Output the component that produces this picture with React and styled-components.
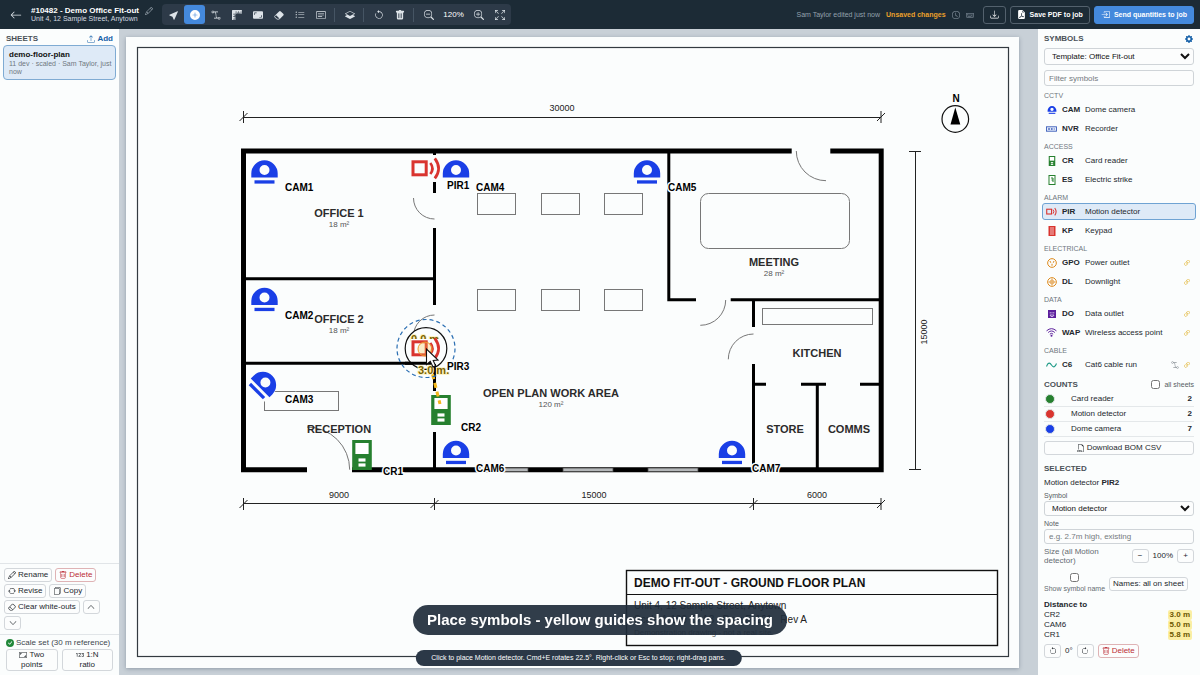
import React from "react";
import styled, { createGlobalStyle, css } from "styled-components";
import {
  Bs123,
  BsArrowClockwise,
  BsArrowCounterclockwise,
  BsArrowLeft,
  BsArrowRepeat,
  BsArrowsFullscreen,
  BsAspectRatio,
  BsAspectRatioFill,
  BsBezier2,
  BsBoxArrowInRight,
  BsCardText,
  BsCheckCircleFill,
  BsChevronDown,
  BsChevronUp,
  BsClock,
  BsCursorFill,
  BsDownload,
  BsEraser,
  BsEraserFill,
  BsFileEarmarkPdfFill,
  BsFiletypeCsv,
  BsFiles,
  BsGearFill,
  BsKeyboard,
  BsLayersHalf,
  BsLink45Deg,
  BsListUl,
  BsPencil,
  BsPlusCircleFill,
  BsRulers,
  BsTrash,
  BsTrashFill,
  BsUpload,
  BsZoomIn,
  BsZoomOut,
} from "react-icons/bs";

const BLUE = "#1a3fe6";
const RED = "#d9342f";
const GREEN = "#26802f";
const ORANGE = "#dd8a1c";
const PURPLE = "#5b1f9c";

const tools = [
  { label: "Select", icon: BsCursorFill },
  { label: "Place symbol", icon: BsPlusCircleFill, active: true },
  { label: "Cable run", icon: BsBezier2 },
  { label: "Measure", icon: BsRulers },
  { label: "Set scale", icon: BsAspectRatioFill },
  { label: "White-out", icon: BsEraserFill },
  { label: "Legend", icon: BsListUl },
  { label: "Text note", icon: BsCardText },
  null,
  { label: "Layers", icon: BsLayersHalf },
  null,
  { label: "Undo", icon: BsArrowCounterclockwise },
  { label: "Delete", icon: BsTrashFill },
  null,
];

const palette = [
  {
    title: "CCTV",
    items: [
      { code: "CAM", name: "Dome camera", icon: <CameraIcon /> },
      { code: "NVR", name: "Recorder", icon: <RecorderIcon /> },
    ],
  },
  {
    title: "ACCESS",
    items: [
      { code: "CR", name: "Card reader", icon: <ReaderIcon /> },
      { code: "ES", name: "Electric strike", icon: <StrikeIcon /> },
    ],
  },
  {
    title: "ALARM",
    items: [
      { code: "PIR", name: "Motion detector", icon: <MotionIcon />, active: true },
      { code: "KP", name: "Keypad", icon: <KeypadIcon /> },
    ],
  },
  {
    title: "ELECTRICAL",
    items: [
      { code: "GPO", name: "Power outlet", icon: <OutletIcon />, linked: true },
      { code: "DL", name: "Downlight", icon: <DownlightIcon />, linked: true },
    ],
  },
  {
    title: "DATA",
    items: [
      { code: "DO", name: "Data outlet", icon: <DataIcon />, linked: true },
      { code: "WAP", name: "Wireless access point", icon: <WifiIcon />, linked: true },
    ],
  },
  {
    title: "CABLE",
    items: [
      { code: "C6", name: "Cat6 cable run", icon: <CableIcon />, linked: true, run: true },
    ],
  },
];

const counts = [
  { name: "Card reader", color: GREEN, total: 2 },
  { name: "Motion detector", color: RED, total: 2 },
  { name: "Dome camera", color: BLUE, total: 7 },
];

const distances = [
  { code: "CR2", value: "3.0 m" },
  { code: "CAM6", value: "5.0 m" },
  { code: "CR1", value: "5.8 m" },
];

export default function App() {
  return (
    <Page>
      <GlobalStyle />
      <TopBar />
      <Workspace>
        <SheetPanel />
        <Canvas>
          <FloorPlan />
          <Hint>
            Click to place Motion detector. Cmd+E rotates 22.5°. Right-click or Esc to
            stop; right-drag pans.
          </Hint>
        </Canvas>
        <SymbolPanel />
      </Workspace>
      <Caption>Place symbols - yellow guides show the spacing</Caption>
    </Page>
  );
}

function TopBar() {
  return (
    <Header>
      <BackLink href="#jobs" aria-label="Back to job">
        <BsArrowLeft />
      </BackLink>
      <JobInfo>
        <JobTitle>
          #10482 - Demo Office Fit-out
          <BsPencil />
        </JobTitle>
        <JobAddress>Unit 4, 12 Sample Street, Anytown</JobAddress>
      </JobInfo>
      <Toolbar>
        {tools.map((tool, i) =>
          tool ? (
            <Tool key={tool.label} aria-label={tool.label} $active={tool.active}>
              <tool.icon />
            </Tool>
          ) : (
            <ToolDivider key={i} />
          )
        )}
        <Tool aria-label="Zoom out">
          <BsZoomOut />
        </Tool>
        <ZoomLevel>120%</ZoomLevel>
        <Tool aria-label="Zoom in">
          <BsZoomIn />
        </Tool>
        <Tool aria-label="Fit to screen">
          <BsArrowsFullscreen />
        </Tool>
      </Toolbar>
      <Status>
        <span>Sam Taylor edited just now</span>
        <Unsaved>Unsaved changes</Unsaved>
        <BsClock />
        <BsKeyboard />
      </Status>
      <HeaderButton aria-label="Download">
        <BsDownload />
      </HeaderButton>
      <HeaderButton>
        <BsFileEarmarkPdfFill />
        Save PDF to job
      </HeaderButton>
      <HeaderButton $primary>
        <BsBoxArrowInRight />
        Send quantities to job
      </HeaderButton>
    </Header>
  );
}

function SheetPanel() {
  return (
    <LeftPanel>
      <PanelHead>
        <PanelTitle>SHEETS</PanelTitle>
        <AddButton>
          <BsUpload />
          Add
        </AddButton>
      </PanelHead>
      <SheetCard>
        <SheetName>demo-floor-plan</SheetName>
        <SheetMeta>11 dev · scaled · Sam Taylor, just now</SheetMeta>
      </SheetCard>
      <SheetActions>
        <Button>
          <BsPencil />
          Rename
        </Button>
        <Button $danger>
          <BsTrash />
          Delete
        </Button>
        <Button>
          <BsArrowRepeat />
          Revise
        </Button>
        <Button>
          <BsFiles />
          Copy
        </Button>
        <Button>
          <BsEraser />
          Clear white-outs
        </Button>
        <Button aria-label="Move up" $square>
          <BsChevronUp />
        </Button>
        <Button aria-label="Move down" $square>
          <BsChevronDown />
        </Button>
      </SheetActions>
      <ScaleBox>
        <ScaleState>
          <BsCheckCircleFill />
          Scale set (30 m reference)
        </ScaleState>
        <ScaleButtons>
          <ScaleButton>
            <BsAspectRatio /> Two points
          </ScaleButton>
          <ScaleButton>
            <Bs123 /> 1:N ratio
          </ScaleButton>
        </ScaleButtons>
      </ScaleBox>
    </LeftPanel>
  );
}

function SymbolPanel() {
  return (
    <RightPanel>
      <PanelHead>
        <PanelTitle>SYMBOLS</PanelTitle>
        <GearButton aria-label="Symbol settings">
          <BsGearFill />
        </GearButton>
      </PanelHead>
      <TemplateSelect aria-label="Template" defaultValue="office">
        <option value="office">Template: Office Fit-out</option>
      </TemplateSelect>
      <FilterInput type="text" aria-label="Filter symbols" placeholder="Filter symbols" />

      {palette.map((group) => (
        <SymbolGroup key={group.title}>
          <GroupTitle>{group.title}</GroupTitle>
          {group.items.map((item) => (
            <SymbolRow key={item.code} $active={item.active}>
              <SymbolIcon>{item.icon}</SymbolIcon>
              <SymbolCode>{item.code}</SymbolCode>
              <SymbolName>{item.name}</SymbolName>
              {item.run && <BsBezier2 color="#7d858c" />}
              {item.linked && <BsLink45Deg color="#dfae22" />}
            </SymbolRow>
          ))}
        </SymbolGroup>
      ))}

      <CountsHead>
        <PanelTitle>COUNTS</PanelTitle>
        <CheckLabel>
          <Checkbox type="checkbox" />
          all sheets
        </CheckLabel>
      </CountsHead>
      <CountTable>
        <tbody>
          {counts.map((row) => (
            <tr key={row.name}>
              <DotCell>
                <Dot $color={row.color} />
              </DotCell>
              <td>{row.name}</td>
              <TotalCell>{row.total}</TotalCell>
            </tr>
          ))}
        </tbody>
      </CountTable>
      <Button $wide>
        <BsFiletypeCsv />
        Download BOM CSV
      </Button>

      <SelectedTitle>SELECTED</SelectedTitle>
      <SelectedName>
        Motion detector <b>PIR2</b>
      </SelectedName>
      <FieldLabel htmlFor="symbol">Symbol</FieldLabel>
      <Select id="symbol" defaultValue="pir">
        <option value="pir">Motion detector</option>
      </Select>
      <FieldLabel htmlFor="note">Note</FieldLabel>
      <Input id="note" type="text" placeholder="e.g. 2.7m high, existing" />
      <SizeRow>
        <SizeLabel>Size (all Motion detector)</SizeLabel>
        <Button $square aria-label="Smaller">−</Button>
        <span>100%</span>
        <Button $square aria-label="Larger">+</Button>
      </SizeRow>
      <NameRow>
        <NameLabel>
          <Checkbox type="checkbox" />
          Show symbol name
        </NameLabel>
        <Button>Names: all on sheet</Button>
      </NameRow>
      <DistanceTitle>Distance to</DistanceTitle>
      {distances.map((row) => (
        <DistanceRow key={row.code}>
          <span>{row.code}</span>
          <Distance>{row.value}</Distance>
        </DistanceRow>
      ))}
      <RotateRow>
        <Button $square aria-label="Rotate left">
          <BsArrowCounterclockwise />
        </Button>
        <span>0°</span>
        <Button $square aria-label="Rotate right">
          <BsArrowClockwise />
        </Button>
        <Button $danger>
          <BsTrash />
          Delete
        </Button>
      </RotateRow>
    </RightPanel>
  );
}

/* Device glyphs, drawn around their own centre */

function Camera() {
  return (
    <g fill={BLUE}>
      <path
        fillRule="evenodd"
        d="M-13.2 5.5V1.5A13.2 13.2 0 0 1 13.2 1.5V5.5ZM0 -7A5 5 0 1 0 0 3A5 5 0 1 0 0 -7Z"
      />
      <rect x="-10" y="8.3" width="20" height="3.3" />
    </g>
  );
}

function Motion() {
  return (
    <g fill="none" stroke={RED} strokeWidth="3">
      <rect x="-13" y="-6.2" width="13.2" height="13" />
      <path d="M4.3 -5Q8.7 0.5 4.3 6" strokeWidth="2.6" />
      <path d="M8.8 -9.7Q16.4 0.5 8.8 10.4" strokeWidth="2.8" />
    </g>
  );
}

function Reader() {
  return (
    <g>
      <rect x="-9.8" y="-15" width="19.6" height="30" fill={GREEN} />
      <g fill="#fff">
        <rect x="-6.6" y="-12" width="13.2" height="11" />
        <rect x="-3.5" y="3.4" width="7" height="3.2" />
        <rect x="-3.5" y="8.4" width="7" height="3.2" />
      </g>
    </g>
  );
}

function CameraIcon() {
  return (
    <svg viewBox="-15 -15 30 30" width="10" height="10">
      <Camera />
    </svg>
  );
}

function RecorderIcon() {
  return (
    <svg viewBox="0 0 20 10" width="11" height="6">
      <rect x="1" y="1" width="18" height="8" fill="#e6edfb" stroke="#3558b8" strokeWidth="1.6" />
      <path d="M4 3.5h3v3H4zM9 3.5h3v3H9zM14 4h2v2h-2z" fill="#3558b8" />
    </svg>
  );
}

function ReaderIcon() {
  return (
    <svg viewBox="-15 -15 30 30" width="10" height="10">
      <Reader />
    </svg>
  );
}

function StrikeIcon() {
  return (
    <svg viewBox="0 0 20 20" width="10" height="10">
      <rect x="4" y="1" width="12" height="18" fill="#fff" stroke={GREEN} strokeWidth="2" />
      <path d="M8 6h4v8M12 10H9" fill="none" stroke={GREEN} strokeWidth="2" />
    </svg>
  );
}

function MotionIcon() {
  return (
    <svg viewBox="-15 -12 30 24" width="11" height="9">
      <Motion />
    </svg>
  );
}

function KeypadIcon() {
  return (
    <svg viewBox="0 0 20 20" width="10" height="10">
      <rect x="3" y="0" width="14" height="20" fill={RED} />
      <path d="M6 4h8M6 8h8M6 12h8M6 16h8" stroke="#fff" strokeWidth="1.4" />
    </svg>
  );
}

function OutletIcon() {
  return (
    <svg viewBox="0 0 20 20" width="10" height="10">
      <circle cx="10" cy="10" r="8.7" fill="none" stroke={ORANGE} strokeWidth="2" />
      <path d="M6 6l1.5 3.5M14 6l-1.5 3.5M10 11.5v4" stroke={ORANGE} strokeWidth="2" />
    </svg>
  );
}

function DownlightIcon() {
  return (
    <svg viewBox="0 0 20 20" width="10" height="10">
      <g fill="none" stroke={ORANGE} strokeWidth="2">
        <circle cx="10" cy="10" r="8.7" />
        <circle cx="10" cy="10" r="4" strokeWidth="1.2" />
        <path d="M10 3v14M3 10h14" strokeWidth="1.5" />
      </g>
    </svg>
  );
}

function DataIcon() {
  return (
    <svg viewBox="0 0 20 20" width="10" height="10">
      <rect x="2" y="2" width="16" height="16" fill={PURPLE} />
      <path
        d="M6.5 6v3M10 6v3M13.5 6v3M6 12h8l-2 3H8z"
        fill="none"
        stroke="#e5d8f5"
        strokeWidth="1.5"
      />
    </svg>
  );
}

function WifiIcon() {
  return (
    <svg viewBox="0 0 20 20" width="11" height="11">
      <g fill="none" stroke={PURPLE} strokeWidth="1.8">
        <path d="M1 7Q10 -1 19 7M4 10Q10 4.5 16 10M7 13Q10 10 13 13" />
      </g>
      <circle cx="10" cy="16" r="1.8" fill={PURPLE} />
    </svg>
  );
}

function CableIcon() {
  return (
    <svg viewBox="0 0 22 12" width="11" height="6">
      <path d="M1 9C4 0 8 1 11 6S18 12 21 3" fill="none" stroke="#1d9a86" strokeWidth="2.2" />
    </svg>
  );
}

/* Floor plan */

const cameras = [
  { x: 264.5, y: 172, label: "CAM1", lx: 285, ly: 191 },
  { x: 264.5, y: 299.5, label: "CAM2", lx: 285, ly: 319 },
  { x: 264, y: 384, label: "CAM3", lx: 285, ly: 403, rotate: 45 },
  { x: 456, y: 172, label: "CAM4", lx: 476, ly: 191 },
  { x: 647, y: 172, label: "CAM5", lx: 668, ly: 191 },
  { x: 456, y: 452.5, label: "CAM6", lx: 476, ly: 472 },
  { x: 732, y: 452.5, label: "CAM7", lx: 752, ly: 472 },
];

const rooms = [
  { x: 339, y: 217, name: "OFFICE 1", area: "18 m²" },
  { x: 339, y: 323, name: "OFFICE 2", area: "18 m²" },
  { x: 339, y: 433, name: "RECEPTION" },
  { x: 551, y: 397, name: "OPEN PLAN WORK AREA", area: "120 m²" },
  { x: 774, y: 266, name: "MEETING", area: "28 m²" },
  { x: 817, y: 357, name: "KITCHEN" },
  { x: 785, y: 433, name: "STORE" },
  { x: 849, y: 433, name: "COMMS" },
];

function Tick({ x, y }) {
  return <path d={`M${x} ${y - 6}v12M${x - 4} ${y + 4}l8 -8`} />;
}

function FloorPlan() {
  return (
    <Drawing viewBox="126 37 893 631" role="img" aria-label="Ground floor plan">
      <rect
        x="137.5"
        y="47.5"
        width="871"
        height="609"
        fill="none"
        stroke="#333a40"
        strokeWidth="1.2"
      />

      <g fill="none" stroke="#222" strokeWidth="1">
        <path d="M243 117.5H881M243 503.5H881M915.5 151V470M909 151.5h12M909 469.5h12" />
        <Tick x={243.5} y={117} />
        <Tick x={881} y={117} />
        <Tick x={243.5} y={504} />
        <Tick x={434.5} y={504} />
        <Tick x={753.5} y={504} />
        <Tick x={881} y={504} />
      </g>
      <Dimension x="562" y="111">30000</Dimension>
      <Dimension x="339" y="498">9000</Dimension>
      <Dimension x="594" y="498">15000</Dimension>
      <Dimension x="817" y="498">6000</Dimension>
      <Dimension transform="translate(927 332) rotate(-90)">15000</Dimension>

      <North x="956" y="102">N</North>
      <circle cx="955.3" cy="119" r="13.3" fill="none" stroke="#111" strokeWidth="1.2" />
      <path d="M955.3 107.5L960.3 124.5H950.5Z" />

      <g fill="none" stroke="#000" strokeWidth="5">
        <path d="M791.7 151H243.5V469.7H307M352 469.7H881.2V151H830.3" />
        <g strokeWidth="3">
          <path d="M434.5 151V193M434.5 228V305M434.5 345V391M434.5 432V470" />
          <path d="M244 278.7H434.5M244 363.2H434.5" />
          <path d="M668.8 151V299.7H696M730.7 299.7H881M753.5 300V327M753.5 364V470" />
          <path d="M753.5 384.3H766M801 384.3H826M860 384.3H881M817.3 384V470" />
        </g>
      </g>
      <g fill="#b5b8ba" stroke="#444" strokeWidth="0.8">
        <rect x="478" y="468" width="50" height="3.5" />
        <rect x="563" y="468" width="50" height="3.5" />
        <rect x="648" y="468" width="50" height="3.5" />
      </g>

      <g fill="none" stroke="#777" strokeWidth="1">
        <path d="M413.5 198A21 21 0 0 0 434.5 219M434.5 315A21 21 0 0 0 413.5 336" />
        <path d="M307 427A42.7 42.7 0 0 1 349.7 469.7M796.3 151A29.7 29.7 0 0 0 826 180.7" />
        <path d="M725.7 300A25.3 25.3 0 0 1 700.3 325.3M753.5 334A25.3 25.3 0 0 0 728.3 359.3" />
        {[477.5, 541.5, 604.5].map((x) => (
          <React.Fragment key={x}>
            <rect x={x} y="193.5" width="38" height="21" />
            <rect x={x} y="289.5" width="38" height="21" />
          </React.Fragment>
        ))}
        <rect x="700.5" y="193.5" width="149" height="55" rx="8" />
        <rect x="762.5" y="308.5" width="110" height="16" />
        <rect x="264.5" y="391.5" width="74" height="19" />
      </g>

      {rooms.map((room) => (
        <React.Fragment key={room.name}>
          <RoomName x={room.x} y={room.y}>
            {room.name}
          </RoomName>
          {room.area && (
            <RoomArea x={room.x} y={room.y + 10}>
              {room.area}
            </RoomArea>
          )}
        </React.Fragment>
      ))}

      <g fill="none" stroke="#111">
        <rect x="626.5" y="570.5" width="371" height="75" strokeWidth="1.4" />
        <path d="M626 594.5H998" strokeWidth="1" />
      </g>
      <BlockTitle x="634" y="587">DEMO FIT-OUT - GROUND FLOOR PLAN</BlockTitle>
      <BlockText x="634" y="609">Unit 4, 12 Sample Street, Anytown</BlockText>
      <BlockText x="634" y="623">{"Scale 1:100 @ A3\u00a0\u00a0 Dwg E-101\u00a0\u00a0 Rev A"}</BlockText>
      <BlockNote x="634" y="635">Demonstration drawing - not a real site</BlockNote>

      {cameras.map((cam) => (
        <g key={cam.label} transform={`translate(${cam.x} ${cam.y}) rotate(${cam.rotate || 0})`}>
          <rect x="-13" y="-13" width="26" height="25" fill="#fbfdfd" />
          <Camera />
        </g>
      ))}
      {/* PIR1 sits over the bar of CAM4 */}
      <rect x="445" y="179" width="22" height="8" fill="#fbfdfd" />
      <g transform="translate(426 168)">
        <rect x="-16" y="-13" width="32" height="27" fill="#fbfdfd" />
        <Motion />
      </g>
      <g transform="translate(441 410)">
        <Reader />
      </g>
      <g transform="translate(362 455)">
        <Reader />
      </g>

      {/* spacing guide from the pointer to the closest device */}
      <path d="M426 348L440 404" stroke="#f3b71b" strokeWidth="3" strokeDasharray="5 4" />
      <circle cx="426" cy="348.5" r="20.8" fill="#fbfdfd" stroke="#111" strokeWidth="1.2" />
      <path d="M405 363.2H431M434.5 364V368" stroke="#000" strokeWidth="3" />
      <circle
        cx="426"
        cy="348.5"
        r="29"
        fill="none"
        stroke="#2b6fb3"
        strokeWidth="1.2"
        strokeDasharray="4 3"
      />
      <GuideText x="411" y="343">0.0 m</GuideText>
      <rect x="411" y="339" width="31" height="18" fill="#fbfdfd" />
      <g transform="translate(426 348)">
        <Motion />
      </g>
      <circle cx="425" cy="349" r="7" fill="#f6c34a" fillOpacity="0.3" stroke="#ef9b2d" />
      <GuideText x="418" y="374">3.0 m.</GuideText>

      {cameras.map((cam) => (
        <Tag key={cam.label} x={cam.lx} y={cam.ly}>
          {cam.label}
        </Tag>
      ))}
      <Tag x="447" y="189">PIR1</Tag>
      <Tag x="447" y="370">PIR3</Tag>
      <Tag x="461" y="431">CR2</Tag>
      <Tag x="383" y="475">CR1</Tag>

      <path
        d="M426.5 349V364.5L430.3 361.3L433 367L435.6 365.8L433.2 360.4L438 360Z"
        fill="#fff"
        stroke="#111"
        strokeWidth="1.1"
      />
    </Drawing>
  );
}

const GlobalStyle = createGlobalStyle`
  * {
    box-sizing: border-box;
  }

  body {
    margin: 0;
    font-family: "Liberation Sans", Arial, sans-serif;
    font-size: 8px;
    line-height: 10px;
    color: #23282d;
  }

  button, input, select {
    font: inherit;
    color: inherit;
    margin: 0;
  }

  svg {
    flex-shrink: 0;
  }
`;

const Page = styled.div`
  height: 100vh;
  display: flex;
  flex-direction: column;
`;

const Header = styled.header`
  display: flex;
  align-items: center;
  gap: 4px;
  height: 29px;
  flex-shrink: 0;
  padding: 0 6px 0 10px;
  background: #1c2b36;
  color: #fff;
`;

const BackLink = styled.a`
  display: flex;
  color: #dfe5ea;
  font-size: 12px;
  margin-right: 5px;
`;

const JobInfo = styled.div`
  white-space: nowrap;
`;

const JobTitle = styled.div`
  display: flex;
  align-items: center;
  gap: 6px;
  font-weight: bold;
  line-height: 9px;

  svg {
    color: #9ba7b1;
  }
`;

const JobAddress = styled.div`
  font-size: 7px;
  line-height: 8px;
  color: #d5dce1;
`;

const Toolbar = styled.div`
  display: flex;
  align-items: center;
  height: 21px;
  margin-left: 5px;
  padding: 0 1px;
  border-radius: 4px;
  background: #2d3a48;
`;

const Tool = styled.button`
  display: flex;
  align-items: center;
  justify-content: center;
  width: 21px;
  height: 19px;
  padding: 0;
  border: 0;
  border-radius: 3px;
  background: ${({ $active }) => ($active ? "#4489dc" : "none")};
  color: ${({ $active }) => ($active ? "#fff" : "#dde3e8")};
  font-size: 10px;
`;

const ToolDivider = styled.span`
  width: 1px;
  height: 14px;
  margin: 0 4px 0 3px;
  background: #465564;
`;

const ZoomLevel = styled.span`
  width: 29px;
  text-align: center;
`;

const Status = styled.div`
  display: flex;
  align-items: center;
  justify-content: flex-end;
  flex: 1;
  gap: 6px;
  margin-right: 5px;
  font-size: 7px;
  white-space: nowrap;
  color: #94a1ad;

  svg {
    font-size: 8px;
  }
`;

const Unsaved = styled.span`
  color: #eba02b;
  font-weight: bold;
`;

const HeaderButton = styled.button`
  display: flex;
  align-items: center;
  gap: 4px;
  height: 18px;
  padding: 0 6px;
  border: 1px solid ${({ $primary }) => ($primary ? "#4489dc" : "#53616d")};
  border-radius: 3px;
  background: ${({ $primary }) => ($primary ? "#4489dc" : "none")};
  color: #fff;
  font-size: 7px;
  font-weight: bold;
  white-space: nowrap;

  svg {
    font-size: 9px;
  }
`;

const Workspace = styled.div`
  flex: 1;
  min-height: 0;
  display: grid;
  grid-template-columns: 119px 1fr 162px;
`;

const LeftPanel = styled.aside`
  display: flex;
  flex-direction: column;
  min-height: 0;
  padding: 4px 3px;
  background: #fbfdfd;
`;

const RightPanel = styled.aside`
  min-height: 0;
  overflow: hidden;
  padding: 4px 6px;
  background: #fbfdfd;
`;

const PanelHead = styled.div`
  display: flex;
  align-items: center;
  justify-content: space-between;
  height: 11px;
`;

const PanelTitle = styled.h2`
  margin: 0;
  font-size: 8px;
  color: #4a5157;

  ${LeftPanel} & {
    padding-left: 3px;
  }
`;

const AddButton = styled.button`
  display: flex;
  align-items: center;
  gap: 2px;
  padding: 0 3px;
  border: 0;
  background: none;
  color: #1560a8;
  font-weight: bold;
`;

const GearButton = styled.button`
  display: flex;
  padding: 0 1px;
  border: 0;
  background: none;
  color: #1560a8;
`;

const SheetCard = styled.div`
  margin-top: 1px;
  padding: 4px 0 3px 5px;
  border: 1px solid #7fabd3;
  border-radius: 4px;
  background: #deeaf7;
`;

const SheetName = styled.div`
  font-weight: bold;
  color: #111;
`;

const SheetMeta = styled.div`
  font-size: 7px;
  line-height: 8px;
  color: #6f7880;
`;

const SheetActions = styled.div`
  display: flex;
  flex-wrap: wrap;
  gap: 2px 3px;
  margin: auto -3px 0;
  padding: 4px;
  border-top: 1px solid #e1e5e8;
`;

const Button = styled.button`
  display: flex;
  align-items: center;
  justify-content: center;
  gap: 2px;
  height: 14px;
  padding: 0 3px;
  border: 1px solid #d3d7db;
  border-radius: 3px;
  background: #fcfdfd;
  white-space: nowrap;

  ${({ $square }) =>
    $square &&
    css`
      width: 17px;
      padding: 0;
    `}

  ${({ $wide }) =>
    $wide &&
    css`
      width: 100%;
      margin-top: 4px;
    `}

  ${({ $danger }) =>
    $danger &&
    css`
      border-color: #dfb3b5;
      color: #bb2d36;
    `}
`;

const ScaleBox = styled.div`
  margin: 0 -3px;
  padding: 3px 6px 0;
  border-top: 1px solid #e1e5e8;
`;

const ScaleState = styled.div`
  display: flex;
  align-items: center;
  gap: 2px;
  white-space: nowrap;
  color: #40474d;

  svg {
    color: #218739;
  }
`;

const ScaleButtons = styled.div`
  display: flex;
  gap: 4px;
  margin-top: 1px;
`;

const ScaleButton = styled.button`
  flex: 1;
  padding: 0 8px;
  border: 1px solid #d3d7db;
  border-radius: 3px;
  background: #fcfdfd;

  svg {
    vertical-align: middle;
  }
`;

const Canvas = styled.main`
  position: relative;
  min-width: 0;
  overflow: hidden;
  padding: 8px 19px 0 7px;
  background: #c8d0d7;
`;

const Drawing = styled.svg`
  display: block;
  width: 100%;
  background: #fbfdfd;
  box-shadow: 0 1px 4px rgba(40, 60, 80, 0.35);
`;

const Hint = styled.div`
  position: absolute;
  left: 50%;
  bottom: 9px;
  transform: translateX(-50%);
  padding: 3px 16px;
  border-radius: 8px;
  background: #2b3847;
  color: #fff;
  font-size: 7px;
  white-space: nowrap;
`;

const Caption = styled.div`
  position: fixed;
  left: 50%;
  bottom: 40px;
  transform: translateX(-50%);
  padding: 6px 14px;
  border-radius: 15px;
  background: rgba(31, 44, 59, 0.92);
  color: #fff;
  font-size: 15px;
  font-weight: bold;
  line-height: 18px;
  white-space: nowrap;
`;

const Dimension = styled.text`
  font-size: 9px;
  text-anchor: middle;
  fill: #222;
`;

const North = styled.text`
  font-size: 10px;
  font-weight: bold;
  text-anchor: middle;
`;

const RoomName = styled.text`
  font-size: 11px;
  font-weight: bold;
  text-anchor: middle;
  fill: #2b2b2b;
`;

const RoomArea = styled.text`
  font-size: 8px;
  text-anchor: middle;
  fill: #555;
`;

const BlockTitle = styled.text`
  font-size: 12px;
  font-weight: bold;
  fill: #111;
`;

const BlockText = styled.text`
  font-size: 10px;
  fill: #222;
`;

const BlockNote = styled.text`
  font-size: 8px;
  fill: #666;
`;

const Tag = styled.text`
  font-size: 10px;
  font-weight: bold;
  fill: #000;
  stroke: #fbfdfd;
  stroke-width: 3px;
  paint-order: stroke;
`;

const GuideText = styled(Tag)`
  font-size: 11px;
  fill: #7a6200;
  stroke: #fdf3c4;
  stroke-width: 2px;
`;

const Input = styled.input`
  display: block;
  width: 100%;
  height: 15px;
  padding: 0 4px;
  border: 1px solid #cfd4d8;
  border-radius: 3px;
  background: #fcfdfd;

  &::placeholder {
    color: #757b80;
  }
`;

const FilterInput = styled(Input)`
  height: 16px;
  margin: 5px 0 4px;
`;

const Select = styled.select`
  display: block;
  width: 100%;
  height: 15px;
  padding: 0 3px;
  border: 1px solid #cfd4d8;
  border-radius: 3px;
  background: #fcfdfd;
  color: #111;
`;

const TemplateSelect = styled(Select)`
  height: 17px;
  margin-top: 4px;
`;

const SymbolGroup = styled.section`
  padding-bottom: 2px;
`;

const GroupTitle = styled.h3`
  margin: 0;
  height: 11px;
  font-size: 7px;
  font-weight: normal;
  line-height: 12px;
  color: #6f777e;
`;

const SymbolRow = styled.button`
  display: flex;
  align-items: center;
  gap: 4px;
  width: calc(100% + 4px);
  height: 17px;
  margin: 0 -2px 2px;
  padding: 0 4px 0 2px;
  border: 1px solid ${({ $active }) => ($active ? "#6fa3d3" : "transparent")};
  border-radius: 3px;
  background: ${({ $active }) => ($active ? "#deeaf7" : "none")};
  text-align: left;
`;

const SymbolIcon = styled.span`
  display: flex;
  justify-content: center;
  width: 13px;
`;

const SymbolCode = styled.b`
  width: 19px;
`;

const SymbolName = styled.span`
  flex: 1;
  white-space: nowrap;
`;

const CountsHead = styled(PanelHead)`
  margin-top: 2px;
`;

const CheckLabel = styled.label`
  display: flex;
  align-items: center;
  gap: 4px;
  font-size: 7px;
  color: #555c62;
`;

const Checkbox = styled.input`
  width: 9px;
  height: 9px;
`;

const CountTable = styled.table`
  width: 100%;
  margin-top: 2px;
  border-spacing: 0;

  td {
    height: 15px;
    padding: 0;
    border-bottom: 1px solid #e4e8ea;
  }
`;

const DotCell = styled.td`
  width: 27px;
`;

const Dot = styled.span`
  display: block;
  width: 10px;
  height: 10px;
  margin-left: 1px;
  border: 1px solid #dfe4e6;
  border-radius: 50%;
  background: ${({ $color }) => $color};
`;

const TotalCell = styled.td`
  && {
    padding-right: 2px;
  }
  text-align: right;
  font-weight: bold;
`;

const SelectedTitle = styled(PanelTitle)`
  margin-top: 9px;
`;

const SelectedName = styled.div`
  margin-top: 4px;
`;

const FieldLabel = styled.label`
  display: block;
  margin-top: 3px;
  font-size: 7px;
  color: #555c62;
`;

const SizeRow = styled.div`
  display: flex;
  align-items: center;
  gap: 4px;
  margin-top: 3px;
`;

const SizeLabel = styled.span`
  flex: 1;
  line-height: 9px;
  color: #656c72;
`;

const NameRow = styled.div`
  display: flex;
  align-items: center;
  gap: 4px;
  margin-top: 8px;
`;

const NameLabel = styled.label`
  display: flex;
  flex-direction: column;
  align-items: center;
  gap: 2px;
  font-size: 7px;
  white-space: nowrap;
  color: #656c72;
`;

const DistanceTitle = styled.div`
  margin-top: 6px;
  font-weight: bold;
`;

const DistanceRow = styled.div`
  display: flex;
  justify-content: space-between;
  padding-right: 2px;
`;

const Distance = styled.b`
  padding: 0 2px;
  border-radius: 2px;
  background: #fbeea3;
  color: #6d5800;
  line-height: 9px;
`;

const RotateRow = styled.div`
  display: flex;
  align-items: center;
  gap: 4px;
  margin-top: 4px;
`;
